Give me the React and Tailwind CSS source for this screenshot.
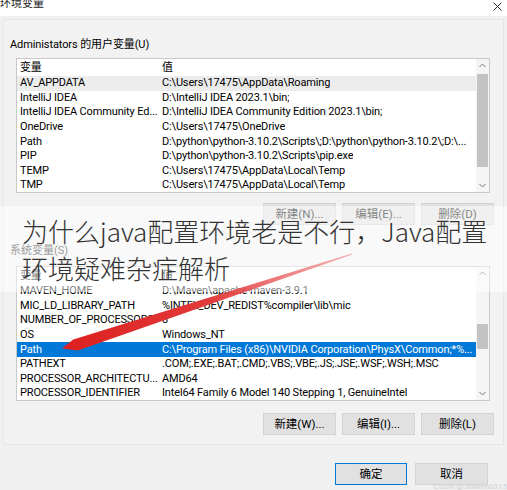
const userVars = [
  ['AV_APPDATA', 'C:\\Users\\17475\\AppData\\Roaming'],
  ['IntelliJ IDEA', 'D:\\IntelliJ IDEA 2023.1\\bin;'],
  ['IntelliJ IDEA Community Ed...', 'D:\\IntelliJ IDEA Community Edition 2023.1\\bin;'],
  ['OneDrive', 'C:\\Users\\17475\\OneDrive'],
  ['Path', 'D:\\python\\python-3.10.2\\Scripts\\;D:\\python\\python-3.10.2\\;D:\\...'],
  ['PIP', 'D:\\python\\python-3.10.2\\Scripts\\pip.exe'],
  ['TEMP', 'C:\\Users\\17475\\AppData\\Local\\Temp'],
  ['TMP', 'C:\\Users\\17475\\AppData\\Local\\Temp'],
];

const sysVars = [
  ['MAVEN_HOME', 'D:\\Maven\\apache-maven-3.9.1'],
  ['MIC_LD_LIBRARY_PATH', '%INTEL_DEV_REDIST%compiler\\lib\\mic'],
  ['NUMBER_OF_PROCESSORS', '8'],
  ['OS', 'Windows_NT'],
  ['Path', 'C:\\Program Files (x86)\\NVIDIA Corporation\\PhysX\\Common;*%...'],
  ['PATHEXT', '.COM;.EXE;.BAT;.CMD;.VBS;.VBE;.JS;.JSE;.WSF;.WSH;.MSC'],
  ['PROCESSOR_ARCHITECTU...', 'AMD64'],
  ['PROCESSOR_IDENTIFIER', 'Intel64 Family 6 Model 140 Stepping 1, GenuineIntel'],
];

function Chevron({ up }) {
  return (
    <svg width="7" height="5" viewBox="0 0 7 5">
      <path d={up ? 'M0.5 4 L3.5 1 L6.5 4' : 'M0.5 1 L3.5 4 L6.5 1'} fill="none" stroke="#777" strokeWidth="1" />
    </svg>
  );
}

function VarList({ rows, selected, hover, thumbTop, thumbHeight }) {
  return (
    <div className="ml-[16px] w-[474px] h-[135px] border border-[#c9c9c9] bg-white flex text-[11px] tracking-[-0.15px]">
      <div className="flex-1 flex flex-col overflow-hidden pt-[1px]">
        {/* 表头 */}
        <div className="h-[16px] flex items-center shrink-0 leading-[14px]">
          <span className="w-[142px] pl-[3px]">变量</span>
          <span className="pl-[3px]">值</span>
        </div>
        {rows.map(([k, v], i) => (
          <div
            key={k + i}
            className={`h-[14.6px] flex items-center shrink-0 whitespace-nowrap leading-[14px] ${
              i === selected ? 'bg-[#0078d7] text-white' : i === hover ? 'bg-[#ececec]' : ''
            }`}
          >
            <span className="w-[142px] shrink-0 pl-[3px] overflow-hidden">{k}</span>
            <span className="pl-[3px] overflow-hidden">{v}</span>
          </div>
        ))}
      </div>
      {/* 滚动条 */}
      <div className="w-[13px] bg-[#f5f5f5] flex flex-col items-center">
        <div className="h-[13px] flex items-center justify-center"><Chevron up /></div>
        <div className="flex-1 w-full">
          <div className="mx-[1px] bg-[#c3c3c3]" style={{ marginTop: thumbTop, height: thumbHeight }} />
        </div>
        <div className="h-[13px] flex items-center justify-center"><Chevron /></div>
      </div>
    </div>
  );
}

function Btn({ children, primary, w = 'w-[73px]' }) {
  return (
    <div
      className={`${w} h-[22px] flex items-center justify-center bg-[#e1e1e1] border leading-[14px] ${
        primary ? 'border-[#0078d7]' : 'border-[#d3d3d3]'
      }`}
    >
      {children}
    </div>
  );
}

export default function App() {
  return (
    <div
      className="relative w-[507px] h-[490px] overflow-hidden bg-[#f0f0f0] text-[11.5px] text-black leading-none"
      style={{ fontFamily: 'Roboto, "Noto Sans CJK SC", sans-serif' }}
    >
      {/* 标题栏 */}
      <div className="h-[16px] bg-white flex items-start justify-between">
        <span className="text-[11px] leading-[12px] -mt-[2px] text-[#222]">环境变量</span>
        <svg width="9" height="9" viewBox="0 0 9 9" className="mt-[2px] mr-[5px]">
          <path d="M0.5 0.5 L8.5 8.5 M8.5 0.5 L0.5 8.5" stroke="#333" strokeWidth="1" />
        </svg>
      </div>

      {/* 主体 */}
      <div className="mx-[3px] mt-[3px] h-[426px] border border-[#e6e6e6] bg-[#f2f2f2]">
        <div className="pl-[6px] pt-[17px] h-[16px] box-content flex items-center text-[11px] tracking-[-0.1px] leading-[14px]">
          Administators 的用户变量(U)
        </div>
        <div className="mt-[5px] -ml-[4px]">
          <VarList rows={userVars} hover={0} thumbTop={2} thumbHeight={93} />
        </div>
        <div className="mt-[10px] flex justify-end gap-[6px] pr-[9px]">
          <Btn>新建(N)...</Btn>
          <Btn>编辑(E)...</Btn>
          <Btn>删除(D)</Btn>
        </div>
        <div className="pl-[6px] mt-[18px] h-[16px] flex items-center text-[11px] leading-[14px] text-[#333]">系统变量(S)</div>
        <div className="mt-[7px] -ml-[4px]">
          <VarList rows={sysVars} selected={4} thumbTop={44} thumbHeight={25} />
        </div>
        <div className="mt-[12px] flex justify-end gap-[6px] pr-[9px]">
          <Btn>新建(W)...</Btn>
          <Btn>编辑(I)...</Btn>
          <Btn>删除(L)</Btn>
        </div>
      </div>

      {/* 确定 / 取消 */}
      <div className="mt-[18px] flex justify-end gap-[8px] pr-[19px]">
        <Btn primary w="w-[72px]">确定</Btn>
        <Btn w="w-[73px]">取消</Btn>
      </div>

      <div className="absolute right-[0px] bottom-[-2px] text-[8px] leading-[10px] text-[#d2d2d2]">CSDN @Jiawen0315</div>

      {/* 覆盖标题 */}
      <div className="absolute left-0 top-[206px] w-[507px] h-[86px] bg-white/50" />
      <div
        className="absolute left-[22px] top-[212px] text-[26px] leading-[37px] text-[#333] font-light whitespace-nowrap"
        style={{ fontFamily: '"Noto Sans CJK SC", sans-serif' }}
      >
        <div>为什么java配置环境老是不行，Java配置</div>
        <div>环境疑难杂症解析</div>
      </div>

      {/* 红色箭头 */}
      <svg className="absolute left-0 top-0" width="507" height="490" viewBox="0 0 507 490">
        <defs>
          <linearGradient id="arr" x1="352" y1="254" x2="62" y2="349" gradientUnits="userSpaceOnUse">
            <stop offset="0" stopColor="#f08080" stopOpacity="0.6" />
            <stop offset="0.5" stopColor="#e23a3a" />
            <stop offset="1" stopColor="#dd1f1f" />
          </linearGradient>
        </defs>
        <polygon
          points="352.2,254.6 351.8,253.4 73.2,339.4 62,348.5 77.8,350.4"
          fill="url(#arr)"
        />
      </svg>
    </div>
  );
}
